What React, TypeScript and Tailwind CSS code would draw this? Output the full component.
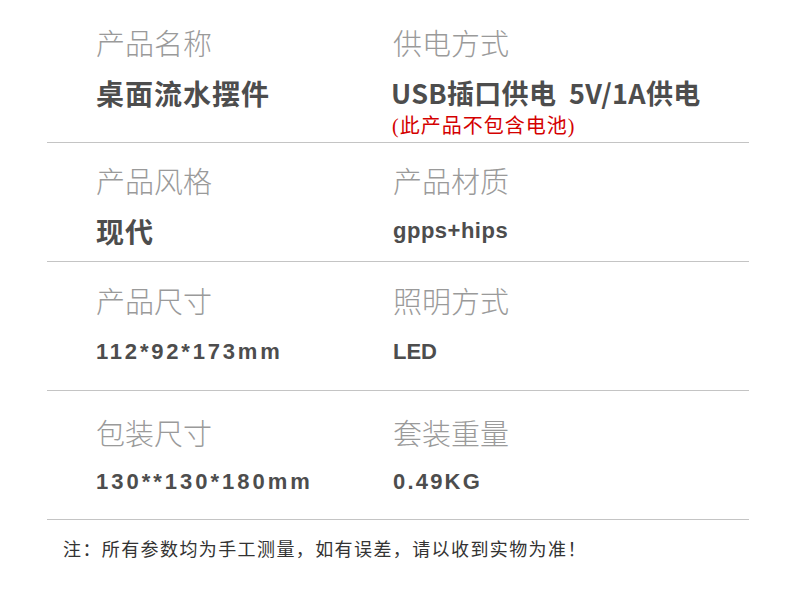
const cjk = "font-['Noto_Sans_CJK_SC',sans-serif]";
const num = "font-['Liberation_Sans','Noto_Sans_CJK_SC',sans-serif]";

type Cell = { label: string; value: string; valueCls: string; note?: string };

const cjkValue = `${cjk} font-bold text-[28px] leading-[30px] tracking-[1px] text-[#4d4d4d]`;
const numValue = `${num} font-bold text-[22px] leading-[30px] text-[#4d4d4d]`;

const rows: { cells: [Cell, Cell]; cls: string; gap: string }[] = [
  {
    cells: [
      { label: "产品名称", value: "桌面流水摆件", valueCls: cjkValue },
      {
        label: "供电方式",
        value: "USB插口供电\u00a0\u00a05V/1A供电",
        valueCls: `${cjk} font-bold text-[27px] leading-[30px] tracking-[0.3px] text-[#4d4d4d] -ml-[2px]`,
        note: "(此产品不包含电池)",
      },
    ],
    cls: "pt-[27px] pb-[5px]",
    gap: "mt-[21px]",
  },
  {
    cells: [
      { label: "产品风格", value: "现代", valueCls: cjkValue },
      { label: "产品材质", value: "gpps+hips", valueCls: `${numValue} tracking-[0.5px]` },
    ],
    cls: "pt-[22px] pb-[15px]",
    gap: "mt-[21px]",
  },
  {
    cells: [
      { label: "产品尺寸", value: "112*92*173mm", valueCls: `${numValue} tracking-[2.8px]` },
      { label: "照明方式", value: "LED", valueCls: numValue },
    ],
    cls: "pt-[23px] pb-[23px]",
    gap: "mt-[22px]",
  },
  {
    cells: [
      { label: "包装尺寸", value: "130**130*180mm", valueCls: `${numValue} tracking-[3px]` },
      { label: "套装重量", value: "0.49KG", valueCls: `${numValue} tracking-[2.2px]` },
    ],
    cls: "pt-[26px] pb-[22px]",
    gap: "mt-[20px]",
  },
];

function SpecCell({ cell, gap }: { cell: Cell; gap: string }) {
  return (
    <div>
      <div className={`${cjk} font-light text-[29px] leading-[30px] text-[#9a9a9a]`}>
        {cell.label}
      </div>
      <div className={`${gap} ${cell.valueCls}`}>{cell.value}</div>
      {cell.note && (
        <div
          className={`mt-[7px] -ml-[1px] font-['Liberation_Serif','Noto_Sans_CJK_SC',serif] text-[20px] leading-[22px] tracking-[1px] text-[#d40000]`}
        >
          {cell.note}
        </div>
      )}
    </div>
  );
}

export default function App() {
  return (
    <main className="w-[790px] h-[599px] bg-white overflow-hidden">
      <div className="ml-[47px] w-[702px]">
        {rows.map((row, i) => (
          <div
            key={i}
            className={`grid grid-cols-[297px_1fr] pl-[49px] border-b border-[#c4c4c4] ${row.cls}`}
          >
            <SpecCell cell={row.cells[0]} gap={row.gap} />
            <SpecCell cell={row.cells[1]} gap={row.gap} />
          </div>
        ))}
        <p
          className={`mt-[17px] pl-[16px] ${cjk} text-[18px] leading-[22px] tracking-[1.4px] text-[#333]`}
        >
          注：所有参数均为手工测量，如有误差，请以收到实物为准！
        </p>
      </div>
    </main>
  );
}
